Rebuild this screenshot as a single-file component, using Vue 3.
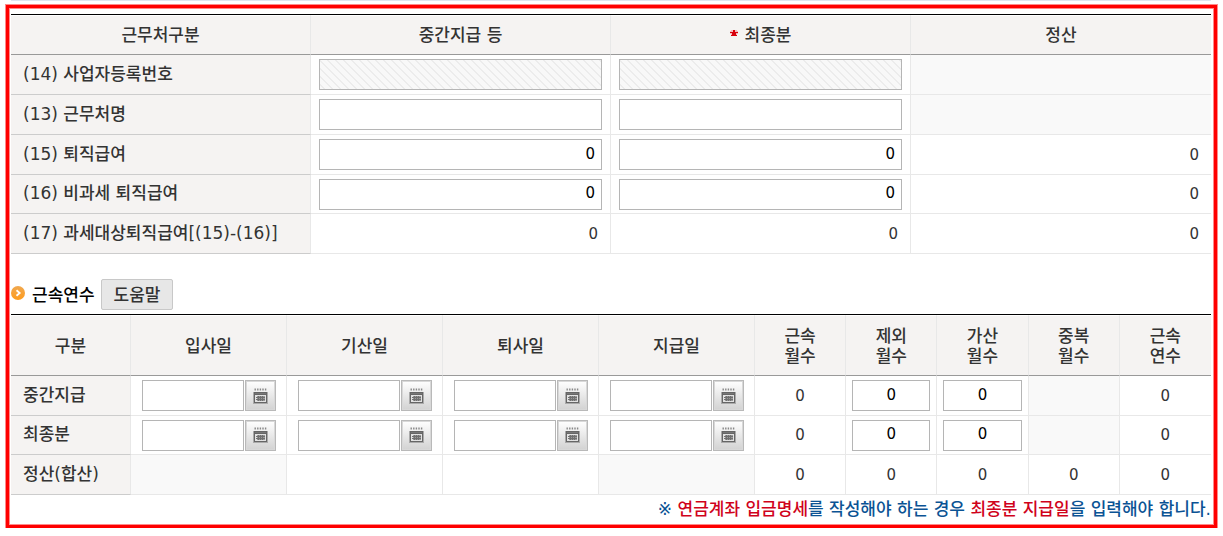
<script setup>
import { reactive } from 'vue'

const payRows = reactive([
  { id: 'regno', label: '(14) 사업자등록번호', kind: 'text', disabled: true, mid: '', last: '', total: '' },
  { id: 'name', label: '(13) 근무처명', kind: 'text', disabled: false, mid: '', last: '', total: '' },
  { id: 'pay', label: '(15) 퇴직급여', kind: 'number', disabled: false, mid: '0', last: '0', total: '0' },
  { id: 'free', label: '(16) 비과세 퇴직급여', kind: 'number', disabled: false, mid: '0', last: '0', total: '0' },
  { id: 'taxable', label: '(17) 과세대상퇴직급여[(15)-(16)]', kind: 'sum', disabled: false, mid: '0', last: '0', total: '0' }
])

const dateCols = ['입사일', '기산일', '퇴사일', '지급일']
const monthCols = [
  ['근속', '월수'],
  ['제외', '월수'],
  ['가산', '월수'],
  ['중복', '월수'],
  ['근속', '연수']
]
const termRows = reactive([
  { id: 'mid', label: '중간지급', dates: ['', '', '', ''], excluded: '0', added: '0' },
  { id: 'last', label: '최종분', dates: ['', '', '', ''], excluded: '0', added: '0' }
])
</script>

<template>
  <main class="page">
    <hr class="topline" />
    <div class="frame">
      <table class="grid pay">
        <colgroup>
          <col v-for="n in 4" :key="n" class="quarter" />
        </colgroup>
        <thead>
          <tr>
            <th scope="col">근무처구분</th>
            <th scope="col">중간지급 등</th>
            <th scope="col">
              <svg class="required" viewBox="0 0 8 7" role="img" aria-label="필수">
                <path d="M1 0h6v1H1zM0 1h8v3H0zM1 4h6v2H1z" fill="#f6b9bb" />
                <path d="M3 0h2v2h3v1H6v2h1v1H1V5h1V3H0V2h3z" fill="#d8000c" />
              </svg>최종분
            </th>
            <th scope="col">정산</th>
          </tr>
        </thead>
        <tbody>
          <tr v-for="row in payRows" :key="row.id">
            <th scope="row">{{ row.label }}</th>
            <template v-if="row.kind === 'sum'">
              <td class="amount">{{ row.mid }}</td>
              <td class="amount">{{ row.last }}</td>
            </template>
            <template v-else>
              <td class="field">
                <input v-model="row.mid" type="text" :class="{ num: row.kind === 'number' }" :disabled="row.disabled" :aria-label="row.label + ' 중간지급 등'" />
              </td>
              <td class="field">
                <input v-model="row.last" type="text" :class="{ num: row.kind === 'number' }" :disabled="row.disabled" :aria-label="row.label + ' 최종분'" />
              </td>
            </template>
            <td class="amount" :class="{ empty: row.kind === 'text' }">{{ row.total }}</td>
          </tr>
        </tbody>
      </table>

      <div class="section">
        <svg class="bullet" viewBox="0 0 14 14" aria-hidden="true">
          <defs>
            <linearGradient id="bulletFill" x1="0" y1="0" x2="0" y2="1">
              <stop offset="0" stop-color="#f0a850" />
              <stop offset="1" stop-color="#ff9c1c" />
            </linearGradient>
          </defs>
          <circle cx="7" cy="7" r="7" fill="url(#bulletFill)" />
          <path d="M5.500 4.200L8.700 7l-3.200 2.800" fill="none" stroke="#fff" stroke-width="1.800" />
        </svg>
        <h2>근속연수</h2>
        <button type="button" class="help">도움말</button>
      </div>

      <table class="grid terms">
        <colgroup>
          <col class="kind" />
          <col v-for="c in dateCols" :key="c" class="date" />
          <col v-for="n in 5" :key="n" class="months" />
        </colgroup>
        <thead>
          <tr>
            <th scope="col">구분</th>
            <th v-for="c in dateCols" :key="c" scope="col">{{ c }}</th>
            <th v-for="(c, i) in monthCols" :key="i" scope="col">{{ c[0] }}<br />{{ c[1] }}</th>
          </tr>
        </thead>
        <tbody>
          <tr v-for="row in termRows" :key="row.id">
            <th scope="row">{{ row.label }}</th>
            <td v-for="(c, i) in dateCols" :key="c">
              <div class="datefield">
                <input v-model="row.dates[i]" type="text" :aria-label="row.label + ' ' + c" />
                <button type="button" class="calendar" :aria-label="c + ' 달력'">
                  <svg viewBox="0 0 15 16" aria-hidden="true">
                    <path d="M1.500 1.500h12" stroke="#888" stroke-width="2" stroke-dasharray="1.400 1.200" />
                    <path d="M0 4h15v12H0z" fill="#aaa" />
                    <path d="M1 4h13v11H1z" fill="#666" />
                    <path d="M2 5h11v1H2z" fill="#777" />
                    <path d="M2 7h11v7H2z" fill="#e2e2e2" />
                    <path d="M4 8h8v5H4z" fill="#999" />
                    <path d="M3 9.500h9M3 11.500h9M5.500 8v5M7.500 8v5M9.500 8v5" stroke="#707070" fill="none" />
                  </svg>
                </button>
              </div>
            </td>
            <td class="count">0</td>
            <td class="small"><input v-model="row.excluded" type="text" :aria-label="row.label + ' 제외월수'" /></td>
            <td class="small"><input v-model="row.added" type="text" :aria-label="row.label + ' 가산월수'" /></td>
            <td class="empty"></td>
            <td class="count">0</td>
          </tr>
          <tr>
            <th scope="row">정산(합산)</th>
            <td class="empty"></td>
            <td></td>
            <td></td>
            <td class="empty"></td>
            <td v-for="n in 5" :key="n" class="count">0</td>
          </tr>
        </tbody>
      </table>

      <p class="note">※ <em>연금계좌 입금명세</em>를 작성해야 하는 경우 <em>최종분 지급일</em>을 입력해야 합니다.</p>
    </div>
  </main>
</template>

<style>
body {
  background: #fff;
}
</style>

<style scoped>
* {
  box-sizing: border-box;
}
.page {
  padding: 0 6px;
  font-family: "DejaVu Sans", "Noto Sans CJK KR", sans-serif;
  font-size: 17px;
  line-height: 20px;
  color: #333;
}
.topline {
  margin: 0 6px 4px 5px;
  border: 0;
  height: 1px;
  background: #dfe5f0;
}
.frame {
  border: 3px solid #f00;
  box-shadow: 0 0 0 1px #ff8a8a, inset 0 0 0 1px #ff8a8a;
  padding: 6px 3px 0 2px;
}
.grid {
  width: 100%;
  table-layout: fixed;
  border-collapse: separate;
  border-spacing: 0;
  border-top: 1px solid #000;
}
.quarter { width: 25%; }
.kind { width: 10%; }
.date { width: 13%; }
.months { width: 7.6%; }
th,
td {
  padding: 0;
  height: 40px;
  border-right: 1px solid #e8e8e8;
  border-bottom: 1px solid #e8e8e8;
}
.pay tbody tr:nth-child(4) > *,
.terms tbody tr:nth-child(2) > * {
  height: 39px;
}
th:last-child,
td:last-child {
  border-right: 0;
}
th {
  background: #f5f3f2;
  font-weight: 500;
  white-space: nowrap;
}
thead th {
  border-bottom-color: #999;
  border-top: 1px solid #fff;
}
.terms thead th {
  height: 61px;
}
tbody th {
  text-align: left;
  padding: 0 0 2px 12px;
  border-bottom-color: #ccc;
}
.empty {
  background: #f9f9f9;
}
.field {
  padding: 0 8px;
}
.small {
  padding: 0 6px;
}
.amount,
.count {
  font-size: 15px;
  text-align: right;
  padding-right: 12px;
}
.count {
  text-align: center;
  padding: 0;
}
input {
  display: block;
  width: 100%;
  height: 31px;
  margin: 0;
  padding: 0 6px 2px;
  border: 1px solid #b5b5b5;
  border-radius: 0;
  background: #fff;
  font: inherit;
  font-size: 15px;
  color: #000;
}
input:disabled {
  background: linear-gradient(45deg, #f8f8f8 0 38%, #ececec 38% 50%, #f8f8f8 50% 88%, #ececec 88%) 0 0 / 8px 8px;
}
.num {
  text-align: right;
}
.small input {
  text-align: center;
}
.required {
  width: 8px;
  height: 7px;
  margin-right: 7px;
  vertical-align: 4px;
}
.section {
  display: flex;
  align-items: center;
  height: 31px;
  margin: 25px 0 4px;
}
.bullet {
  width: 14px;
  height: 14px;
  margin: 0 7px 4px 0;
}
h2 {
  margin: 0 6px 0 0;
  font-size: 17px;
  font-weight: 500;
  color: #000;
}
button {
  margin: 0;
  padding: 0;
  font: inherit;
  color: #333;
}
.help {
  height: 31px;
  padding: 0 12px;
  border: 1px solid #c8c8c8;
  border-radius: 2px;
  background: #e7e7e7;
  font-weight: 500;
}
.datefield {
  display: flex;
  gap: 1px;
  padding: 0 10px 0 11px;
}
.datefield input {
  flex: 1;
  min-width: 0;
}
.calendar {
  display: flex;
  align-items: center;
  justify-content: center;
  width: 31px;
  height: 31px;
  border: 1px solid #b9b9b9;
  box-shadow: inset 0 0 0 1px #d8d8d8;
  background: linear-gradient(#fff, #d2d2d2);
}
.calendar svg {
  width: 15px;
  height: 16px;
}
.note {
  margin: 0;
  padding: 4px 0 6px;
  text-align: right;
  font-weight: 500;
  color: #0b5394;
}
.note em {
  font-style: normal;
  color: #d0021b;
}
</style>
